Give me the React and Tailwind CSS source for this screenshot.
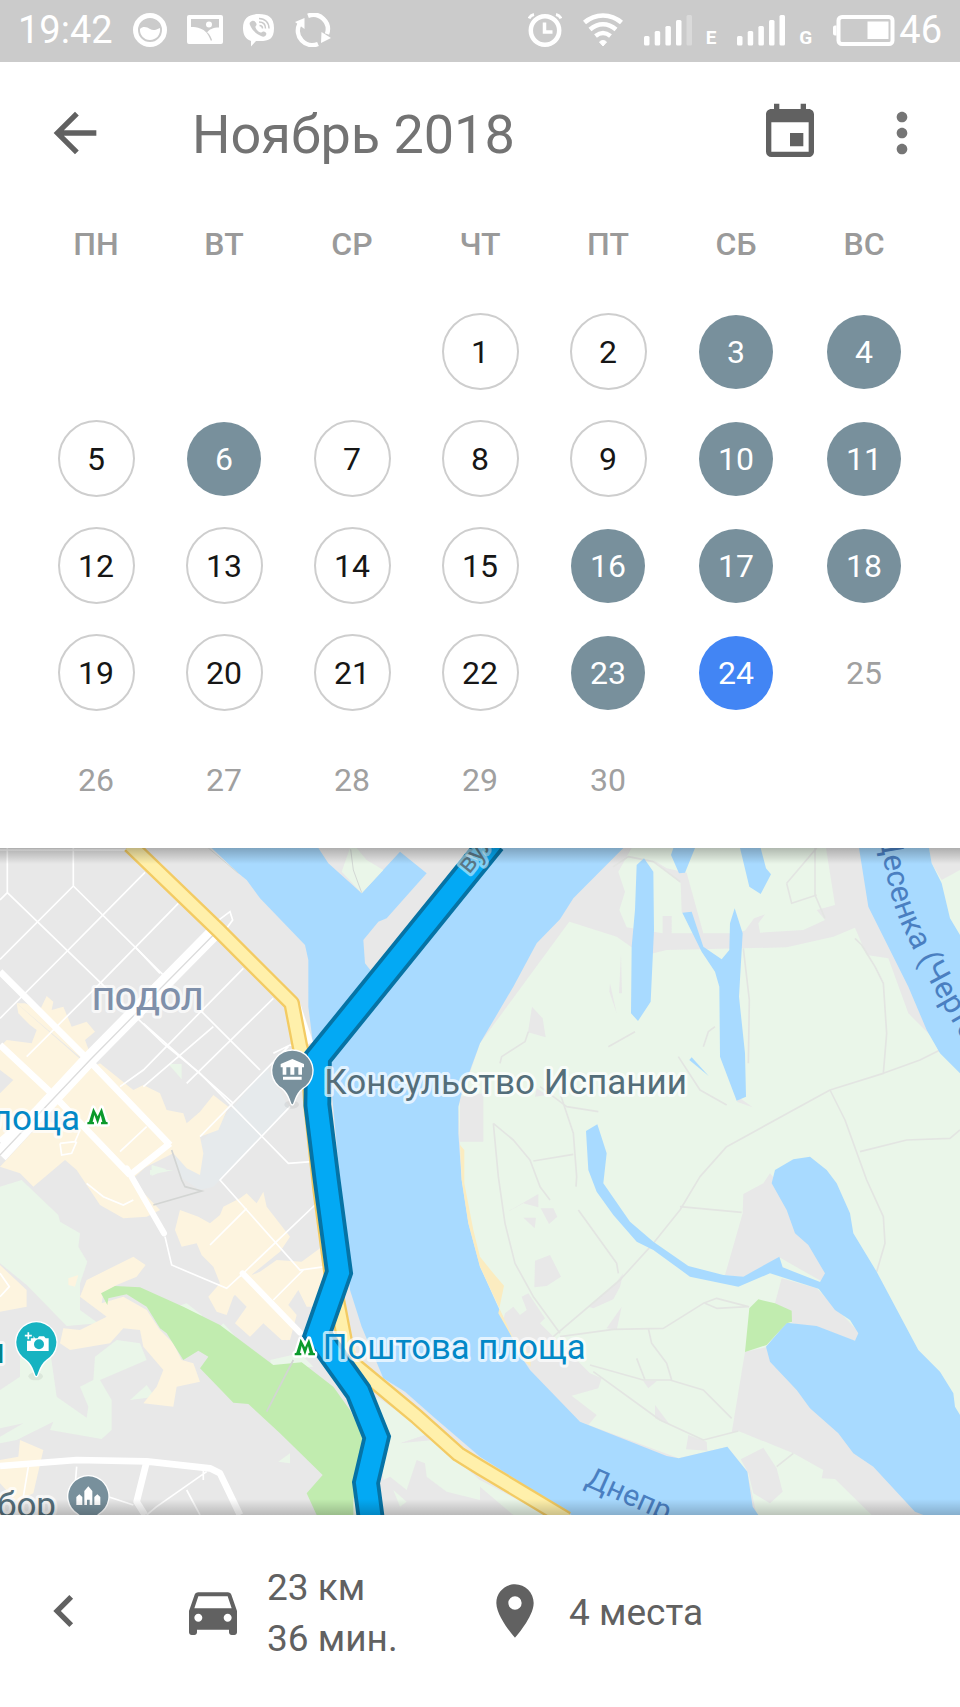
import React from "react";
import {
  MdArrowBack,
  MdChevronLeft,
  MdDirectionsCar,
  MdEvent,
  MdMoreVert,
  MdPlace,
} from "react-icons/md";

const weekdays = ["ПН", "ВТ", "СР", "ЧТ", "ПТ", "СБ", "ВС"];

const weeks = [
  [null, null, null, 1, 2, 3, 4],
  [5, 6, 7, 8, 9, 10, 11],
  [12, 13, 14, 15, 16, 17, 18],
  [19, 20, 21, 22, 23, 24, 25],
  [26, 27, 28, 29, 30, null, null],
];

const visited = [3, 4, 6, 10, 11, 16, 17, 18, 23];
const today = 24;

function dayStyle(day) {
  if (day === today) return "size-[74px] bg-[#4285f4] text-white";
  if (visited.includes(day)) return "size-[74px] bg-[#78909c] text-white";
  if (day > today) return "size-[74px] text-[#a0a0a0]";
  return "size-[77px] border-2 border-[#cecece] text-[#161616]";
}

function Signal({ weak }) {
  return (
    <svg viewBox="0 0 48 31" className="h-[31px] w-12" fill="currentColor" aria-hidden="true">
      <rect x="0" y="21" width="5.5" height="9.5" rx="1.5" />
      <rect x="10.7" y="16" width="5.5" height="14.5" rx="1.5" />
      <rect x="21.4" y="11" width="5.5" height="19.5" rx="1.5" />
      <rect x="32" y="5" width="5.5" height="25.5" rx="1.5" />
      <rect x="42.5" y="0" width="5.5" height="30.5" rx="1.5" opacity={weak ? 0.3 : 1} />
    </svg>
  );
}

function StatusBar() {
  return (
    <div className="flex h-[62px] items-center justify-between bg-[#cbcbcb] px-[18px] pb-[2px] text-[38px] leading-none text-white">
      <div className="flex items-center gap-5">
        <span>19:42</span>
        <svg viewBox="0 0 34 34" className="size-[34px]" aria-hidden="true">
          <circle cx="17" cy="17" r="14.5" fill="none" stroke="currentColor" strokeWidth="5" />
          <path d="M7 16c3-3 7-2 10 0s6 1 10-1c1 7-4 12-10 12S6.500 22 7 16z" fill="currentColor" />
        </svg>
        <svg viewBox="0 0 36 30" className="h-[30px] w-9" aria-hidden="true">
          <path
            fill="currentColor"
            fillRule="evenodd"
            d="M2 0h32a2 2 0 0 1 2 2v25a2 2 0 0 1-2 2H2a2 2 0 0 1-2-2V2a2 2 0 0 1 2-2zM4 4v8c7 0 12 2 16 5.500 2-3 6-5 12-5V4zM19 9.500a3 3 0 1 0 6 0a3 3 0 1 0-6 0zM15 14c5 3 7 7 9 12l1-1c-1-3-2-5-4-7z"
          />
        </svg>
        <svg viewBox="0 0 32 33" className="h-[33px] w-8" aria-hidden="true">
          <path
            fill="currentColor"
            d="M16 0C25 0 31 3 31 14S26 27 17 27h-4l-5 5.500V27C2 25 0 20 0 14 0 4 6 0 16 0z"
          />
          <path
            fill="#cbcbcb"
            d="M9 7c2-1 4 1 4.500 3s-1.500 2-1 3.500c1 2.500 2.500 4 5 5 1.500.5 1.500-1.500 3.500-1 2 .8 3 2 2 3.500-1 2-3 2-5 1-5-2-9-6-11-11C6 9 7 8 9 7z"
          />
          <path
            fill="none"
            stroke="#cbcbcb"
            strokeWidth="1.500"
            d="M16 4.500c6 0 10 4 10 10M16 8c4 0 6.500 2.500 6.500 6.500M16.500 11.500c2 0 3 1 3 3"
          />
        </svg>
        <svg viewBox="0 0 36 34" className="h-[34px] w-9" aria-hidden="true">
          <g fill="none" stroke="currentColor" strokeWidth="4.500">
            <path d="M13 2.800A14.500 14.500 0 0 1 32 21" />
            <path d="M23 31A14.500 14.500 0 0 1 4.500 11" />
          </g>
          <path d="M0 9l9.500-4v11zM36 25l-10 5 .5-11z" fill="currentColor" />
        </svg>
      </div>
      <div className="flex items-center gap-[21px]">
        <svg viewBox="0 0 34 34" className="size-[34px]" fill="none" stroke="currentColor" aria-hidden="true">
          <circle cx="17" cy="17.500" r="14.200" strokeWidth="4.500" />
          <path d="M16.500 9.500v9.500h8" strokeWidth="3.500" />
          <path d="M1 5.500a7 7 0 0 1 5-4M33 5.500a7 7 0 0 0-5-4" strokeWidth="3" />
        </svg>
        <svg viewBox="0 0 40 34" className="h-[34px] w-10" fill="none" stroke="currentColor" aria-hidden="true">
          <path d="M1.500 9.500C12 0 28 0 38.500 9.500" strokeWidth="4.500" />
          <path d="M7 16.500c8-7 18-7 26 0" strokeWidth="4.500" />
          <path d="M12.500 23c5-4 10-4 15 0" strokeWidth="4.500" />
          <path d="M16.500 29c2-2 5-2 7 0L20 33z" fill="currentColor" strokeWidth="1" />
        </svg>
        <div className="flex items-end gap-[14px]">
          <Signal weak />
          <span className="text-[19px] leading-[17px] font-bold">E</span>
        </div>
        <div className="flex items-end gap-[14px]">
          <Signal />
          <span className="text-[19px] leading-[17px] font-bold">G</span>
        </div>
        <div className="flex items-center gap-1">
          <svg viewBox="0 0 62 31" className="h-[31px] w-[62px]" aria-hidden="true">
            <rect x="5.500" y="2" width="54" height="27" rx="3.500" fill="none" stroke="currentColor" strokeWidth="4" />
            <path d="M3.500 10.500v10H2a2 2 0 0 1-2-2v-6a2 2 0 0 1 2-2z" fill="currentColor" />
            <rect x="34.500" y="6.500" width="21" height="17.500" fill="currentColor" />
          </svg>
          <span>46</span>
        </div>
      </div>
    </div>
  );
}

function Header() {
  return (
    <header className="flex h-[142px] items-center pr-[26px] pl-[43px] text-[#616161]">
      <button aria-label="Назад" className="size-16">
        <MdArrowBack className="size-16" />
      </button>
      <h1 className="ml-[85px] flex-1 pt-1 text-[54px] leading-none text-[#737373]">Ноябрь 2018</h1>
      <button aria-label="Сегодня" className="size-16">
        <MdEvent className="size-16" />
      </button>
      <button aria-label="Ещё" className="ml-12 size-16 text-[#757575]">
        <MdMoreVert className="size-16" />
      </button>
    </header>
  );
}

function Calendar() {
  return (
    <div className="px-8 pb-[15px]">
      <table className="w-full table-fixed border-collapse">
        <thead>
          <tr className="h-[94px]">
            {weekdays.map((d) => (
              <th key={d} className="pt-4 align-top text-[32px] leading-[48px] font-medium text-[#9a9a9a]">
                {d}
              </th>
            ))}
          </tr>
        </thead>
        <tbody>
          {weeks.map((week, i) => (
            <tr key={i} className="h-[107px]">
              {week.map((day, j) => (
                <td key={j} className="p-0 align-middle">
                  {day && (
                    <button
                      className={`mx-auto flex items-center justify-center rounded-full text-[32px] leading-none ${dayStyle(day)}`}
                    >
                      {day}
                    </button>
                  )}
                </td>
              ))}
            </tr>
          ))}
        </tbody>
      </table>
    </div>
  );
}

function WaterAndLand() {
  return (
    <>
      <rect x="0" y="24" width="2880" height="2001" fill="#e8e8e8" />
      {/* eastern islands */}
      <path
        fill="#eaf6e9"
        d="M1870 24L1440 610 1375 800 1385 1020 1440 1280 1560 1545 1740 1745 2036 1855 2182 1820 2242 1895 2270 2025H2880V24z"
      />
      <g fill="#e8e8e8">
        <path d="M1870 24L1720 175 1685 238 1850 290 1893 320 1960 340 2000 330 2360 322 2500 290 2565 263 2600 345 2665 355 2725 520 2790 585 2640 200 2590 24H2478L2505 195 2450 210 2475 240 2410 270 2280 278 2275 250 2295 223 2262 235 2235 272 2190 280H2110L2060 98 2000 85 1960 60 2000 95 2042 130 2045 215 2090 280H2015V228H1988V280L1880 262 1858 210 1875 155 1855 95 1895 24z" />
        <path d="M1596 500L1628 535 1637 592 1584 577zM1380 770V905H1450V760z" />
        <path d="M2795 70L2825 120 2880 90V24H2787z" />
        <path d="M2310 1000L2290 1030 2230 1062 2228 1120 2175 1305 2230 1312 2338 1252 2475 1330 2475 1200z" />
        <path d="M2345 1315L2450 1345 2580 1480 2565 1502 2375 1448 2325 1390z" />
        <path d="M2235 1535L2298 1522 2420 1650 2770 2025H2615L2505 1917 2465 1915 2470 1890 2380 1840 2215 1773 2195 1778z" />
        <path d="M2290 1823L2330 1885 2348 1955 2310 1990 2260 1960 2245 1900 2222 1858zM2065 1785L2120 1805 2122 1832 2058 1828z" />
        <path d="M1515 1420L1540 1400 1560 1425 1580 1410 1565 1370 1585 1360 1635 1435 1620 1450 1770 1600 1805 1615 1795 1645 1715 1667 1790 1725 1765 1755 1740 1745 1590 1590 1510 1440z" />
        <path d="M1605 1262L1650 1245 1683 1310 1640 1338 1603 1342zM1622 1105L1660 1105 1672 1130 1647 1152zM1515 1120L1615 1062 1615 1102 1570 1090zM1570 1133H1608L1604 1165z" />
        <path d="M1765 1400L1850 1325 1870 1300 1860 1340 1840 1378 1780 1405zM1820 1465L1865 1400 1850 1470z" />
        <path d="M1610 745L1640 765 1605 770zM2220 775L2258 802 2210 785zM1830 430L1850 520 1828 455zM1863 340L1866 460 1857 460z" />
        <path d="M1965 1695L2010 1755 1965 1735zM1930 1623H1970L1945 1645z" />
      </g>
      {/* footpaths */}
      <g fill="none" stroke="#e3e5e2" strokeWidth="5" strokeLinejoin="round">
        <path d="M2565 295L2585 315 2625 380 2650 430 2660 580 2650 700 2760 660 2820 630" />
        <path d="M2650 700L2490 750 2180 920 2100 1010 2040 1110 1960 1210 1860 1320 1660 1490" />
        <path d="M2490 750L2535 840 2600 1020 2650 1130 2655 1210 2630 1295M2580 935L2720 900 2850 895 2880 870" />
        <path d="M1480 850L1495 1010 1515 1150 1545 1270 1600 1370 1680 1480M1480 850L1540 900 1590 960 1620 1040 1650 1080" />
        <path d="M1680 760L1720 880 1730 1010 1728 1040M1600 963L1720 943M1735 1110L1850 1270 1855 1300" />
        <path d="M2040 1100L2225 1117M1680 1490L1840 1468 1990 1465 2110 1390 2150 1375 2245 1400 2150 1405 2115 1390" />
        <path d="M1770 1575L1930 1620 2010 1620 2110 1650 2195 1735M1945 1465L1955 1510 2000 1570 2015 1620M1910 1555L1935 1620" />
        <path d="M1780 1595L1980 1740 2110 1800 2215 1773M2330 1880L2380 1840" />
        <path d="M2230 325L2248 480 2245 670M2360 130L2375 190 2450 165M2445 24L2445 165 2475 235M2360 130L2450 24" />
        <path d="M1500 670L1505 650 1575 605 1585 575M1620 740L1700 800 1795 815M1825 620L1905 575M2035 650L2100 750 2180 795" />
        <path d="M1840 80L1885 50 1960 65 2040 125M2110 620L2125 575 2145 560" />
      </g>
      {/* rivers, channels and inlets */}
      <g fill="#a8daff">
        <path d="M635 24L715 100 740 120 780 175 915 315 925 360 925 500 940 620 990 700 1020 1020 1050 1350 1085 1460 1150 1615 1215 1655 1300 1730 1440 1850 1715 2025H2275L2258 2000 2242 1895 2182 1820 2036 1855 2000 1848 1740 1745 1590 1590 1560 1545 1440 1280 1405 1150 1385 1020 1375 880 1375 800 1385 760 1440 610 1540 440 1610 310 1680 238 1720 175 1870 24z" />
        <path d="M1932 55L1960 95 1962 270 1952 485 1914 543 1893 520 1895 320 1905 210 1910 75z" />
        <path d="M2020 24L2013 45 2037 100 2055 98 2085 24zM2220 24L2248 140 2282 162 2313 103 2298 85 2282 24z" />
        <path d="M2047 218L2075 215 2110 320 2165 358 2188 330 2190 250 2204 205 2228 280 2217 470 2235 640 2238 770 2210 782 2160 650 2158 440 2145 395 2105 335z" />
        <path d="M2068 660L2075 652 2126 708z" />
        <path d="M1758 873L1792 853 1820 940 1810 1030 1890 1145 1960 1205 2065 1278 2170 1305 2230 1310 2338 1250 2348 1282 2470 1330 2460 1348 2310 1300 2215 1340 2070 1310 1960 1230 1910 1205 1840 1125 1790 1055 1765 990z" />
        <path d="M2325 990L2380 958 2430 950 2480 990 2510 1030 2550 1120 2560 1180 2630 1295 2755 1530 2820 1595 2860 1660 2865 1700 2880 1725V2025H2770L2745 2015 2620 1880 2560 1840 2515 1780 2430 1705 2390 1650 2310 1565 2298 1520 2360 1448 2450 1458 2565 1502 2575 1480 2550 1440 2505 1410 2455 1345 2458 1330 2475 1300 2425 1215 2385 1180 2360 1110 2315 1030z" />
        <path d="M2577 24L2605 200 2725 440 2780 570 2820 640 2880 700V285L2850 235 2825 130 2795 70 2787 24z" />
      </g>
      <path fill="#e8e8e8" d="M955 24L985 70 1085 160 1200 35 1280 100 1160 235 1135 245 1090 300 1095 370 1115 395 1430 24z" />
      <path fill="#eaf6e9" d="M1050 24L1025 95 1085 160 1150 90 1100 60 1070 24z" />
      <path fill="none" stroke="#d3d8d5" strokeWidth="3" d="M625 24L715 100M1052 28L1060 90 1085 158" />
      <path fill="#c1ecaf" d="M2275 1378L2325 1390 2375 1412 2376 1445 2360 1450 2300 1515 2235 1536 2248 1405z" />
      <path fill="#fbecc0" d="M1380 915L1393 930V1030L1420 1170 1440 1250 1480 1300 1512 1337 1495 1420 1535 1490 1592 1548V1580L1570 1560 1440 1280 1405 1150 1385 1020z" />
    </>
  );
}

function WestBank() {
  return (
    <>
      {/* pale parkland */}
      <g fill="#eaf6e9">
        <path d="M0 1040L65 1020 175 1125 180 1145 240 1180 235 1220 262 1265 240 1330 240 1410 295 1450 200 1458 80 1335 0 1270z" />
        <path d="M60 1520L150 1530 170 1670 260 1733 265 1700 240 1640 280 1620 285 1550 350 1500 420 1510 440 1560 300 1620 335 1680V1770L305 1797 150 1770 160 1745 50 1800 0 1810V1790L70 1750 0 1765V1650L60 1610z" />
        <path d="M505 672H545V718zM455 975L500 988 455 1008zM450 990L520 990 450 1005zM390 1680L440 1635 465 1670z" />
        <path d="M500 1410L560 1390 605 1425 600 1450zM640 1480L670 1450 720 1505zM810 1560L900 1540 940 1580 820 1590zM835 1865L870 1840V1870z" />
        <path d="M1130 1670L1290 1780 1200 1810 1300 1800 1440 1920V1980L1340 1955 1280 1910 1275 1870 1250 1860 1220 1950 1170 1910 1150 1920z" />
        <path d="M1440 1920L1640 2025H1540L1440 1940z" />
        <path d="M960 2025L1045 1975 1070 1990 1070 2025zM1180 1950L1220 1985 1200 2000z" />
      </g>
      <path fill="#e6eaec" d="M700 800L800 680 860 790 870 800 640 1040 600 1050 540 1010 520 930 610 900z" />
      {/* built-up blocks */}
      <g fill="#fdf4df">
        <path d="M120 510L140 468 160 485 155 510 190 500 215 560 260 545 285 575 255 600 270 640 250 660 50 490 75 490z" />
        <path d="M50 490L250 665 120 780 0 690V620L20 600 95 610 110 570 90 555 55 520z" />
        <path d="M300 670L400 750 430 735 480 760 500 810 550 820 560 850 600 815 640 765 685 800 655 870 600 890 610 940 600 1005 560 985 520 940 380 1010 130 780 200 720z" />
        <path d="M200 790L270 700 520 905 400 1015zM0 760L60 700 150 780 90 830 0 900z" />
        <path d="M0 980L130 840 240 870 385 1010 480 1110 440 1130 370 1135 300 1095 230 990 195 960 100 1040 60 1000z" />
        <path d="M540 1110L595 1130 630 1150 660 1125 670 1100 720 1075 740 1060 770 1090 790 1055 800 1100 870 1190 840 1235 760 1300 700 1370 680 1425 650 1415 625 1370 660 1330 640 1280 605 1245 590 1210 545 1220 525 1170z" />
        <path d="M780 1295L830 1260 905 1265 960 1225 975 1330 960 1400 920 1400 895 1350 865 1395 890 1425 870 1500 845 1500 790 1450 750 1490 705 1450 740 1400 700 1360 720 1320z" />
        <path d="M400 1250L437 1275 410 1310 350 1335 310 1360 305 1390 370 1370 440 1410 480 1470 520 1510 545 1560 580 1570 600 1625 530 1640 520 1700 430 1690 470 1640 490 1590 430 1520 420 1470 370 1465 330 1510 210 1530 180 1510 190 1465 240 1470 320 1430 240 1370 260 1320z" />
        <path d="M0 1275L80 1350V1400L0 1415zM60 1800L130 1830 100 1960 50 1985 0 1930V1860L55 1850z" />
        <path d="M205 1315L235 1305 225 1340 205 1335zM1000 1440L1040 1430 1035 1450z" />
      </g>
      <path
        fill="#c1ecaf"
        d="M303 1360L345 1338 420 1342 550 1400 660 1455 820 1575 905 1567 1000 1640 1050 1710 1095 1800 1060 1980V2025H950L920 1960 968 1905 840 1780 745 1692 700 1688 600 1585 625 1550 595 1532 550 1560 500 1480 480 1465 440 1400 380 1363 325 1375 322 1395z"
      />
      <path fill="none" stroke="#d3d5d3" strokeWidth="5" d="M880 1560L800 1715M515 930L545 1020 555 1040 605 1053 460 1095" />
      {/* side streets */}
      <g fill="none" stroke="#fff" strokeWidth="5">
        <path d="M22 24V158L490 610 600 700 865 970 935 965M220 24V138L500 415M22 158L0 180M220 138L0 358M0 30H380" />
        <path d="M435 97L190 345 0 535M535 190L300 430 80 650M730 385L430 690 360 740M820 475L560 730" />
        <path d="M405 320L480 400M640 560L430 740M865 620L600 890M430 550L700 790M600 510L780 690M820 640L870 615 910 620M870 800L660 1020 740 1110 900 1290 975 1280" />
        <path d="M945 1095L740 1290 720 1310M740 1105L630 1215M495 1190L515 1275 680 1345 740 1290M910 1290L820 1380M650 245L690 215 698 240 680 265" />
        <path d="M440 860L360 935M180 910L225 905 240 870M180 910L185 945 215 940 230 905M260 1030L310 1070 370 1095 400 1080M0 1300L28 1340 0 1370" />
        <path d="M230 1880L225 1940M85 1880L70 1970M560 1950L600 2025M620 1895L470 2000 440 2025M325 1970L400 1995M610 1890V1920" />
      </g>
      {/* avenues */}
      <g fill="none" stroke="#fff" strokeLinejoin="round">
        <path strokeWidth="20" d="M0 395L270 665 510 915M0 615L160 765 390 1005M160 770L0 905M390 1005L510 910" />
        <path strokeWidth="18" strokeLinecap="round" d="M380 985L492 1180M728 1300L900 1478" />
        <path strokeWidth="20" d="M0 1878L230 1860 440 1864 630 1885 660 1900 720 2025M440 1865L410 1985 435 2025" />
        <path strokeWidth="46" d="M645 275L270 655 0 945" />
        <path stroke="#dcdcdc" strokeWidth="4" d="M640 285L270 660 0 945" />
        <path strokeWidth="20" d="M890 490L930 610" />
      </g>
    </>
  );
}

function MetroMark({ x, y }) {
  return (
    <path
      transform={`translate(${x} ${y})`}
      d="M0 50V44L5 42 18 0 31 26 43 0 56 42 61 44V50H41V44L45 42 40 22 31 50 21 22 16 42 20 44V50z"
      fill="#0b9a2c"
      stroke="#fff"
      strokeWidth="14"
      strokeLinejoin="round"
      paintOrder="stroke"
    />
  );
}

function Pin({ x, y, color, children }) {
  return (
    <g transform={`translate(${x} ${y})`}>
      <ellipse cx="-2" cy="102" rx="22" ry="12" fill="#000" opacity=".06" />
      <path
        d="M0 101C-5 101-6 72-30 52A60 60 0 1 1 30 52C6 72 5 101 0 101z"
        fill={color}
        stroke="#fff"
        strokeWidth="8"
        paintOrder="stroke"
      />
      {children}
    </g>
  );
}

function RouteMap() {
  return (
    <svg
      viewBox="0 24 2880 2001"
      preserveAspectRatio="xMidYMid slice"
      className="block h-auto min-h-full w-full"
      role="img"
      aria-label="Карта маршрута"
    >
      <defs>
        <path id="desenka" d="M2636 -20C2654 80 2668 180 2714 275S2812 470 2900 620" />
        <path id="street" d="M1408 104L1560 -84" />
      </defs>
      <WaterAndLand />
      <WestBank />

      <g fill="none" strokeLinejoin="round">
        <path
          stroke="#f3cb63"
          strokeWidth="50"
          d="M390 15L655 270 875 490 900 620 930 720 935 800 962 1050 995 1300 1020 1430 1045 1560 1250 1730 1375 1842 1440 1882 1700 2038"
        />
        <path
          stroke="#fff0ab"
          strokeWidth="36"
          d="M390 15L655 270 875 490 900 620 930 720 935 800 962 1050 995 1300 1020 1430 1045 1560 1250 1730 1375 1842 1440 1882 1700 2038"
        />
        <path
          stroke="#0673a5"
          strokeWidth="83"
          strokeLinejoin="miter"
          d="M1478 4L954 652 952 795 980 1020 1017 1297 952 1483 1075 1655 1130 1792 1098 1928 1113 2040"
        />
        <path
          stroke="#03a9f4"
          strokeWidth="60"
          strokeLinejoin="miter"
          d="M1478 4L954 652 952 795 980 1020 1017 1297 952 1483 1075 1655 1130 1792 1098 1928 1113 2040"
        />
      </g>

      <Pin x={877} y={692} color="#78909c">
        <path
          fill="#fff"
          d="M0-35L35-20V-10H29V12H18V-10H6V12H-6V-10H-18V12H-29V-10H-35V-20zM-28 18H28V27H-28z"
        />
      </Pin>
      <Pin x={109} y={1507} color="#17b3c1">
        <path
          fill="#fff"
          fillRule="evenodd"
          d="M-28-18H-8V-18L-4-12 4-12 8-18H23L28-12H37V26H-28zM-7 6a15 15 0 1 0 30 0a15 15 0 1 0-30 0z"
        />
        <path stroke="#17b3c1" strokeWidth="5" fill="#fff" d="M-29-33H-19V-25H-11V-15H-19V-7H-29V-15H-37V-25H-29z" />
      </Pin>
      <Pin x={265} y={1969} color="#78909c">
        <path
          fill="#fff"
          d="M0-30L12-16V26H4V10H-4V26H-12V-16zM-27-6L-18 2V26H-36V2zM27-6L36 2V26H18V2z"
        />
      </Pin>
      <MetroMark x={262} y={803} />
      <MetroMark x={884} y={1496} />

      <g
        className="font-[Roboto,'Noto_Sans',sans-serif]"
        stroke="#fff"
        strokeOpacity=".7"
        strokeWidth="18"
        strokeLinejoin="round"
        paintOrder="stroke"
      >
        <text x="277" y="510" fontSize="95" fontWeight="500" fill="#7f90aa">
          ПОДОЛ
        </text>
        <text x="973" y="762" fontSize="105" fill="#546e7a">
          Консульство Испании
        </text>
        <text x="240" y="869" fontSize="105" fill="#0288c7" textAnchor="end">
          площа
        </text>
        <text x="968" y="1557" fontSize="104" fill="#0288c7">
          Поштова площа
        </text>
        <text x="168" y="2031" fontSize="105" fill="#546e7a" textAnchor="end">
          бор
        </text>
        <text x="15" y="1569" fontSize="105" fill="#00838f" textAnchor="end">
          и
        </text>
        <text fontSize="80" fill="#5b7886" strokeOpacity=".5">
          <textPath href="#street">вул</textPath>
        </text>
      </g>
      <g className="font-[Roboto,'Noto_Sans',sans-serif]" fill="#4a7fc1" fontSize="93">
        <text transform="translate(1752 1936) rotate(24)" fontSize="90">
          Днепр
        </text>
        <text>
          <textPath href="#desenka">Десенка (Черто</textPath>
        </text>
      </g>
    </svg>
  );
}

function Summary() {
  return (
    <footer className="flex h-48 items-center bg-white pl-8 text-[37px] leading-[51px] text-[#616161]">
      <button aria-label="Предыдущий день" className="mr-[85px] size-16">
        <MdChevronLeft className="size-16" />
      </button>
      <div className="flex w-[302px] items-center gap-[22px]">
        <MdDirectionsCar className="size-16 shrink-0" />
        <p className="pt-1">
          23 км
          <br />
          36 мин.
        </p>
      </div>
      <div className="flex items-center gap-[22px]">
        <MdPlace className="size-16 shrink-0" />
        <p className="pt-[2px]">4 места</p>
      </div>
    </footer>
  );
}

export default function App() {
  return (
    <main className="flex min-h-screen flex-col bg-white font-[Roboto,'Noto_Sans',sans-serif]">
      <StatusBar />
      <Header />
      <Calendar />
      <section className="relative flex-1 overflow-hidden">
        <RouteMap />
        <div className="pointer-events-none absolute inset-x-0 top-0 h-4 bg-linear-to-b from-black/25 to-transparent" />
        <div className="pointer-events-none absolute inset-x-0 bottom-0 h-4 bg-linear-to-t from-black/20 to-transparent" />
      </section>
      <Summary />
    </main>
  );
}
